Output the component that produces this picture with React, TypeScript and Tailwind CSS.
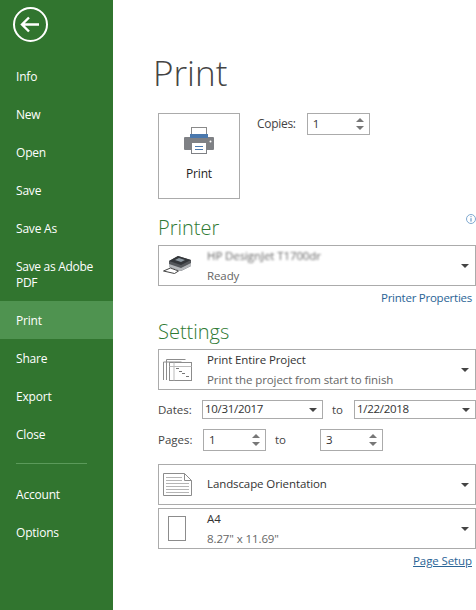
import { ReactNode } from "react";

const font = "font-['Open_Sans','Noto_Sans',sans-serif]";

function NavItem({ label, active }: { label: string; active?: boolean }) {
  return (
    <div className={`flex h-[38px] items-center pl-4 pt-[2px] text-[12px] tracking-[-0.2px] text-white ${active ? "bg-[#4f9350]" : ""}`}>
      {label}
    </div>
  );
}

function Caret() {
  return <div className="h-0 w-0 border-x-[4px] border-t-[4px] border-x-transparent border-t-[#444]" />;
}

function Spinner({ value, width }: { value: string; width: string }) {
  return (
    <div className={`flex h-[22px] items-center justify-between border border-[#ababab] pl-[5px] pr-[5px] text-[11.5px] text-[#333] ${width}`}>
      <span>{value}</span>
      <div className="flex flex-col gap-[4px]">
        <div className="h-0 w-0 border-x-[4px] border-b-[4px] border-x-transparent border-b-[#777]" />
        <div className="h-0 w-0 border-x-[4px] border-t-[4px] border-x-transparent border-t-[#777]" />
      </div>
    </div>
  );
}

function DateBox({ value, width }: { value: string; width: string }) {
  return (
    <div className={`flex h-[19px] items-center justify-between border border-[#ababab] pl-[2px] pr-[5px] text-[11.5px] text-[#333] ${width}`}>
      <span className="-mt-[2px] tracking-[-0.3px]">{value}</span>
      <Caret />
    </div>
  );
}

function Select({ icon, title, sub, height }: { icon: ReactNode; title: ReactNode; sub?: string; height: string }) {
  return (
    <div className={`flex items-center border border-[#ababab] ${height}`}>
      <div className="flex w-[48px] shrink-0 pl-[4px]">{icon}</div>
      <div className="flex grow flex-col gap-[3px] text-[11.5px] leading-[17px] tracking-[-0.1px]">
        <div className="text-[#333]">{title}</div>
        {sub && <div className="text-[#666]">{sub}</div>}
      </div>
      <div className="pr-[6px]">
        <Caret />
      </div>
    </div>
  );
}

function PrintIcon() {
  return (
    <svg width="30" height="27" viewBox="0 0 30 27">
      <rect x="7.5" y="0.5" width="15" height="10" fill="#fff" stroke="#8a8a8a" />
      <rect x="6" y="7" width="18" height="4" fill="#4a78ad" />
      <path d="M1 10h5v1h18v-1h5a1 1 0 0 1 1 1v11a1 1 0 0 1-1 1H1a1 1 0 0 1-1-1V11a1 1 0 0 1 1-1z" fill="#7f8185" />
      <rect x="7.5" y="15.5" width="15" height="11" fill="#fff" stroke="#7f8185" />
      <path d="M11 19.5h8M11 22.5h8" stroke="#4a78ad" />
      <circle cx="26.5" cy="14.5" r="1" fill="#fff" />
    </svg>
  );
}

function PrinterDevice() {
  return (
    <svg width="29" height="19" viewBox="0 0 29 19">
      <path d="M6 5l9-5 13 4v6l-10 5-12-4z" fill="#55585c" />
      <path d="M6 5l9-5 13 4-10 5z" fill="#33363a" />
      <path d="M12 4l4-2 6 2-4 2z" fill="#8e9aa3" />
      <path d="M6 8l12 4 10-5v3l-10 5-12-4z" fill="#b4b7ba" />
      <path d="M0.5 15l7-3 8 3-4 2.5z" fill="#fff" stroke="#444" />
    </svg>
  );
}

function PagesIcon() {
  return (
    <svg width="29" height="23" viewBox="0 0 29 23" fill="none" stroke="#8c8c8c">
      <path d="M0.5 22v-18h18" />
      <path d="M3.5 22v-20.500h19" />
      <rect x="6.500" y="4.500" width="22" height="18" fill="#fff" />
      <path d="M11 4.500v18M6.500 8.500h22" stroke="#bbb" />
      <path d="M13 10.500h3M16 13.500h3M19 15.500h3M23 18.500h3" stroke="#777" />
    </svg>
  );
}

function DocIcon() {
  return (
    <svg width="29" height="23" viewBox="0 0 29 23" fill="none" stroke="#8c8c8c">
      <path d="M0.5 0.5h21l7 7v15h-28z" fill="#fff" />
      <path d="M21.500 0.500v7h7" />
      <path d="M3 4.500h16M3 7.500h16M3 10.500h23M3 13.500h23M3 16.500h23M3 19.500h23" stroke="#b5b5b5" />
    </svg>
  );
}

function PaperIcon() {
  return (
    <svg className="ml-[5px]" width="18" height="25" viewBox="0 0 18 25">
      <rect x="0.5" y="0.5" width="17" height="24" fill="#fff" stroke="#8c8c8c" />
    </svg>
  );
}

export default function App() {
  return (
    <div className={`flex h-[610px] w-[476px] overflow-hidden bg-white ${font}`}>
      {/* Sidebar */}
      <div className="w-[113px] shrink-0 bg-[#31752f]">
        <div className="flex h-[57px] items-start pl-[13px] pt-[7px]">
          <svg width="36" height="36" viewBox="0 0 36 36" fill="none" stroke="#fff">
            <circle cx="17.5" cy="17.5" r="16.5" strokeWidth="2" />
            <path d="M9 17.5h17M16 10.5l-7 7 7 7" strokeWidth="2.4" />
          </svg>
        </div>
        <NavItem label="Info" />
        <NavItem label="New" />
        <NavItem label="Open" />
        <NavItem label="Save" />
        <NavItem label="Save As" />
        <div className="flex h-[54px] items-center pl-4 pr-2 pt-[2px] text-[12px] leading-[16px] tracking-[-0.3px] text-white">
          Save as Adobe PDF
        </div>
        <NavItem label="Print" active />
        <NavItem label="Share" />
        <NavItem label="Export" />
        <NavItem label="Close" />
        <div className="ml-4 mt-[10px] h-px w-[71px] bg-[#5b9a5a]" />
        <div className="mt-[11px]">
          <NavItem label="Account" />
          <NavItem label="Options" />
        </div>
      </div>

      {/* Main */}
      <div className="w-[363px] shrink-0 pl-[45px]">
        <h1 className="-ml-[5px] mt-[47px] h-[52px] text-[35px] font-light leading-[52px] text-[#444]">Print</h1>

        <div className="mt-[14px] flex">
          <div className="flex h-[86px] w-[82px] flex-col items-center border border-[#ababab] pt-[13px]">
            <PrintIcon />
            <div className="mt-[12px] text-[12px] font-medium leading-[16px] tracking-[-0.2px] text-[#222]">Print</div>
          </div>
          <div className="ml-[17px] flex h-[22px] items-center gap-[11px] text-[12px] text-[#444]">
            <span className="tracking-[-0.3px]">Copies:</span>
            <Spinner value="1" width="w-[63px]" />
          </div>
        </div>

        <div className="relative mt-[13px] h-[32px] text-[20px] font-light leading-[32px] text-[#2f7a33]">
          Printer
          <svg className="absolute right-0 top-[2px]" width="10" height="10" viewBox="0 0 10 10" fill="none">
            <circle cx="5" cy="5" r="4.5" stroke="#7fa8cf" />
            <path d="M5 4.200v3.400M5 2.200v1" stroke="#4f86bd" />
          </svg>
        </div>
        <div className="mt-px">
          <Select
            height="h-[41px]"
            icon={<PrinterDevice />}
            title={<span className="text-[#666] blur-[1.2px]">HP DesignJet T1700dr</span>}
            sub="Ready"
          />
        </div>
        <div className="mt-[3px] pr-[4px] text-right text-[11.5px] leading-[17px] tracking-[-0.25px] text-[#2a6496]">Printer Properties</div>

        <div className="mt-[9px] h-[34px] text-[20px] font-light leading-[34px] text-[#2f7a33]">Settings</div>
        <Select height="h-[41px]" icon={<PagesIcon />} title="Print Entire Project" sub="Print the project from start to finish" />

        <div className="mt-[10px] flex items-center text-[11.5px] text-[#444]">
          <span className="w-[44px]">Dates:</span>
          <DateBox value="10/31/2017" width="w-[121px]" />
          <span className="w-[31px] pl-[9px]">to</span>
          <DateBox value="1/22/2018" width="w-[122px]" />
        </div>

        <div className="mt-[10px] flex items-center text-[11.5px] text-[#444]">
          <span className="w-[45px]">Pages:</span>
          <Spinner value="1" width="w-[63px]" />
          <span className="w-[54px] pl-[9px]">to</span>
          <Spinner value="3" width="w-[63px]" />
        </div>

        <div className="mt-[13px] flex flex-col gap-[3px]">
          <Select height="h-[41px]" icon={<DocIcon />} title={<span className="-mt-[2px] block">Landscape Orientation</span>} />
          <Select height="h-[41px]" icon={<PaperIcon />} title="A4" sub={'8.27" x 11.69"'} />
        </div>
        <div className="mt-[3px] pr-[4px] text-right text-[11.5px] leading-[17px] tracking-[-0.1px] text-[#2a6496] underline">Page Setup</div>
      </div>
    </div>
  );
}
